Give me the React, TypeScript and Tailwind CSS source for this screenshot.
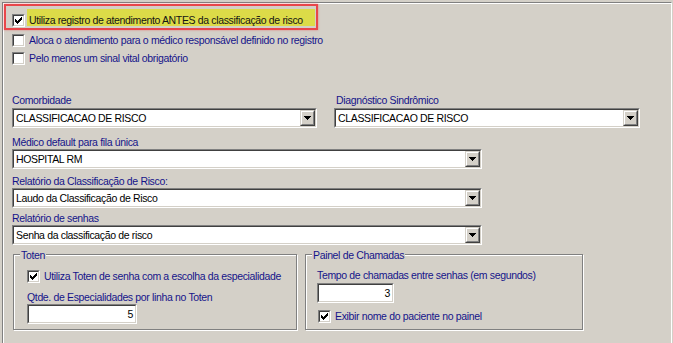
import React from "react";

function Sunken({ className, innerClassName, children }: { className?: string; innerClassName?: string; children?: React.ReactNode }) {
  return (
    <div className={`border border-t-[#808080] border-l-[#808080] border-r-white border-b-white ${className ?? ""}`}>
      <div className={`h-full border border-t-[#404040] border-l-[#404040] border-r-[#d4d0c8] border-b-[#d4d0c8] bg-white flex items-center ${innerClassName ?? ""}`}>
        {children}
      </div>
    </div>
  );
}

function Check({ checked, className }: { checked?: boolean; className?: string }) {
  return (
    <Sunken className={`w-[13px] h-[13px] shrink-0 ${className ?? ""}`}>
      {checked ? (
        <svg width="9" height="9" viewBox="0 0 9 9" shapeRendering="crispEdges" className="block">
          <path
            fill="#000"
            d="M7 1h1v1h-1z M6 2h2v1h-2z M1 3h1v1h-1z M5 3h3v1h-3z M1 4h2v1h-2z M4 4h3v1h-3z M1 5h5v1h-5z M2 6h3v1h-3z M3 7h1v1h-1z"
          />
        </svg>
      ) : null}
    </Sunken>
  );
}

function Combo({ value, className }: { value: string; className?: string }) {
  return (
    <Sunken className={`h-[20px] ${className ?? ""}`}>
      <div className="flex-1 pl-[2px] text-black whitespace-nowrap overflow-hidden">{value}</div>
      <div className="w-[15px] h-full border border-t-[#d4d0c8] border-l-[#d4d0c8] border-r-[#404040] border-b-[#404040]">
        <div className="h-full border border-t-white border-l-white border-r-[#808080] border-b-[#808080] bg-[#d4d0c8] flex items-center justify-center">
          <svg width="7" height="4" viewBox="0 0 7 4" shapeRendering="crispEdges" className="block">
            <path fill="#000" d="M0 0h7v1h-7z M1 1h5v1h-5z M2 2h3v1h-3z M3 3h1v1h-1z" />
          </svg>
        </div>
      </div>
    </Sunken>
  );
}

function Edit({ value, className }: { value: string; className?: string }) {
  return (
    <Sunken className={`h-[20px] ${className ?? ""}`} innerClassName="justify-end pr-[2px]">
      <span className="text-black">{value}</span>
    </Sunken>
  );
}

const blue = "text-[#14148a]";

export default function App() {
  return (
    <div className="w-[673px] h-[343px] overflow-hidden bg-[#d4d0c8] pt-[2px] pl-[2px] font-['Liberation_Sans',Arial,sans-serif] text-[10.5px] leading-[13px] tracking-[-0.35px]">
      <div className="w-[670px] h-[400px] border-t border-l border-r border-t-[#808080] border-l-[#808080] border-r-white">
        <div className="h-full border-t border-l border-white">
          {/* Highlighted first option */}
          <div className="w-[314px] h-[26px] border-2 border-[#e8464a] shadow-[0_0_2px_rgba(232,70,74,0.6)] flex items-start pl-[6px]">
            <Check checked className="mt-[8px]" />
            <div className="ml-[2px] mt-[3px] mr-[1px] h-[17px] flex-1 bg-[#dcdb48] pl-[2px] pt-[5px] text-[#141414] whitespace-nowrap">
              Utiliza registro de atendimento ANTES da classificação de risco
            </div>
          </div>

          <div className="mt-[4px] ml-[8px] flex items-center gap-[4px]">
            <Check />
            <span className={`${blue} whitespace-nowrap`}>Aloca o atendimento para o médico responsável definido no registro</span>
          </div>
          <div className="mt-[5px] ml-[8px] flex items-center gap-[4px]">
            <Check />
            <span className={`${blue} whitespace-nowrap`}>Pelo menos um sinal vital obrigatório</span>
          </div>

          <div className="mt-[29px] ml-[8px] flex gap-[17px]">
            <div className="w-[305px] flex flex-col">
              <div className={blue}>Comorbidade</div>
              <Combo value="CLASSIFICACAO DE RISCO" className="mt-[1px] w-[305px]" />
            </div>
            <div className="w-[306px] flex flex-col">
              <div className={`${blue} pl-[2px]`}>Diagnóstico Sindrômico</div>
              <Combo value="CLASSIFICACAO DE RISCO" className="mt-[1px] w-[306px]" />
            </div>
          </div>

          <div className="ml-[8px] w-[470px] flex flex-col">
            <div className={`${blue} mt-[8px]`}>Médico default para fila única</div>
            <Combo value="HOSPITAL RM" />
            <div className={`${blue} mt-[6px]`}>Relatório da Classificação de Risco:</div>
            <Combo value="Laudo da Classificação de Risco" />
            <div className={`${blue} mt-[4px]`}>Relatório de senhas</div>
            <Combo value="Senha da classificação de risco" />
          </div>

          <div className="mt-[9px] ml-[9px] flex gap-[8px]">
            <div className="relative w-[284px] h-[76px] border border-[#808080] shadow-[inset_1px_1px_0_#fff,1px_1px_0_#fff] pl-[13px] pt-[15px]">
              <div className={`absolute left-[6px] top-[-6px] px-[1px] bg-[#d4d0c8] ${blue}`}>Toten</div>
              <div className="flex items-center gap-[4px]">
                <Check checked />
                <span className={`${blue} whitespace-nowrap`}>Utiliza Toten de senha com a escolha da especialidade</span>
              </div>
              <div className={`${blue} mt-[8px]`}>Qtde. de Especialidades por linha no Toten</div>
              <Edit value="5" className="w-[110px]" />
            </div>

            <div className="relative w-[278px] h-[76px] border border-[#808080] shadow-[inset_1px_1px_0_#fff,1px_1px_0_#fff] pl-[11px] pt-[14px]">
              <div className={`absolute left-[6px] top-[-6px] px-[1px] bg-[#d4d0c8] ${blue}`}>Painel de Chamadas</div>
              <div className={`${blue} whitespace-nowrap`}>Tempo de chamadas entre senhas (em segundos)</div>
              <Edit value="3" className="w-[77px] mt-[1px]" />
              <div className="mt-[7px] ml-[1px] flex items-center gap-[4px]">
                <Check checked />
                <span className={`${blue} whitespace-nowrap`}>Exibir nome do paciente no painel</span>
              </div>
            </div>
          </div>
        </div>
      </div>
    </div>
  );
}
